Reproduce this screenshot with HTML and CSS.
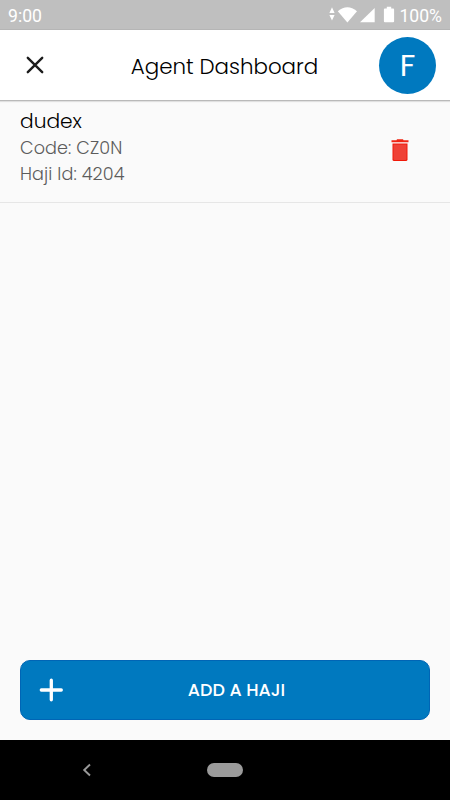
FILE: index.html
```html
<!DOCTYPE html>
<html lang="en">
<head>
    <meta charset="UTF-8">
    <meta name="viewport" content="width=device-width, initial-scale=1.0">
    <title>Agent Dashboard</title>
    <link rel="stylesheet" href="styles.css">
</head>
<body>
    <div class="status-bar">
        <span class="clock">9:00</span>
        <svg class="status-icons" width="68" height="20" viewBox="0 0 68 20" fill="#fff">
            <path d="M4 2.3L6.6 8H1.4zM4 15.6L1.4 10h5.2z"/>
            <path d="M9.8 6.3Q19.4-1.6 29 6.3L19.4 17.6z"/>
            <path d="M46.7 3v14.3H32z"/>
            <path d="M58.8 1.8h4.4v1.8h2q.9 0 .9.9v11.7q0 1.1-1 1.1h-8.2q-1 0-1-1.1V4.5q0-.9.9-.9h2z"/>
        </svg>
        <span class="battery">100%</span>
    </div>
    <header class="header">
        <button class="close" aria-label="Close">
            <svg width="18" height="18" viewBox="0 0 18 18" fill="none" stroke="#1c1c1c" stroke-width="2.4" stroke-linecap="round">
                <path d="M1.8 1.8l14.4 14.4M16.2 1.8L1.8 16.2"/>
            </svg>
        </button>
        <h1 class="title">Agent Dashboard</h1>
        <div class="avatar">F</div>
    </header>
    <main class="content">
        <div class="haji">
            <div class="haji-info">
                <p class="haji-name">dudex</p>
                <p class="haji-code">Code: CZ0N</p>
                <p class="haji-id">Haji Id: 4204</p>
            </div>
            <button class="delete" aria-label="Delete">
                <svg width="18" height="23" viewBox="0 0 18 23">
                    <path d="M.5 1.2h5L6 .2h6l.5 1h5v2H.5z" fill="#f02412"/>
                    <path d="M1.5 4.6h15v15.8q0 1.6-1.6 1.6H3.1q-1.6 0-1.6-1.6z" fill="#f01808"/>
                    <path d="M2.5 5.6h13v14.5q0 .9-.9.9H3.4q-.9 0-.9-.9z" fill="#ef4136"/>
                </svg>
            </button>
        </div>
        <button class="add">
            <svg width="24" height="24" viewBox="0 0 24 24" fill="none" stroke="#fff" stroke-width="3.3" stroke-linecap="round">
                <path d="M12.3 2.2v19.6M2.3 12h20"/>
            </svg>
            <span class="add-text">ADD A HAJI</span>
        </button>
    </main>
    <nav class="nav-bar">
        <svg class="back" width="10" height="14" viewBox="0 0 10 14" fill="none" stroke="#999" stroke-width="1.9">
            <path d="M8 1.5L2.2 7 8 12.5"/>
        </svg>
        <div class="home"></div>
    </nav>
</body>
</html>
```
FILE: styles.css
```css
html, body{
    margin: 0;
    padding: 0;
    height: 100vh;
}
body{
    display: flex;
    flex-direction: column;
    overflow: hidden;
    background-color: #fafafa;
    font-family: Poppins, Inter, sans-serif;
    font-weight: 300;
    font-feature-settings: "cv11";
    color: #000;
}
h1, p{
    margin: 0;
    white-space: nowrap;
}
button{
    padding: 0;
    border: none;
    background: none;
    font-family: inherit;
    font-feature-settings: inherit;
    cursor: pointer;
}
svg{
    display: block;
    flex: none;
}
.status-bar{
    display: flex;
    align-items: center;
    box-sizing: border-box;
    height: 30px;
    padding: 2px 8px 0 8px;
    background-color: #bfbfbf;
    border-bottom: 1px solid #b5b5b5;
    color: white;
    font-family: Roboto, sans-serif;
    font-size: 17.6px;
    font-weight: 400;
}
.status-icons{
    margin-left: auto;
    margin-top: -2px;
}
.battery{
    margin-left: 3px;
}
.header{
    display: flex;
    align-items: center;
    justify-content: space-between;
    box-sizing: border-box;
    height: 71px;
    padding: 0 14px 0 26px;
    background-color: white;
    border-bottom: 1px solid #b9b9b9;
    box-shadow: 0 1px 1px rgba(0, 0, 0, 0.1);
}
.title{
    margin-top: 2px;
    margin-left: 26px;
    font-size: 21.4px;
    font-weight: 300;
}
.avatar{
    width: 57px;
    height: 57px;
    border-radius: 50%;
    background-color: #0079bf;
    color: white;
    font-size: 31px;
    font-weight: 400;
    line-height: 57px;
    text-align: center;
}
.content{
    flex: 1;
    display: flex;
    flex-direction: column;
    justify-content: space-between;
}
.haji{
    display: flex;
    align-items: center;
    justify-content: space-between;
    box-sizing: border-box;
    height: 102px;
    padding: 0 41px 2px 20px;
    border-bottom: 1px solid #e6e6e6;
}
.haji-info{
    margin-top: -8px;
    color: #5c5c5c;
    font-size: 17.6px;
    line-height: 26px;
    letter-spacing: 0.1px;
}
.haji-name{
    color: #000;
    font-size: 20.2px;
    line-height: 28px;
    letter-spacing: 0;
}
.add{
    display: flex;
    align-items: center;
    height: 60px;
    margin: 0 20px 20px;
    padding: 0 19px 0 18px;
    box-sizing: border-box;
    border: 1px solid #0065b5;
    border-radius: 10px;
    background-color: #0079bf;
    color: white;
}
.add-text{
    flex: 1;
    font-size: 17.5px;
    font-weight: 500;
    text-align: center;
}
.nav-bar{
    display: grid;
    grid-template-columns: 1fr auto 1fr;
    align-items: center;
    height: 60px;
    background-color: black;
}
.back{
    margin-left: 82px;
}
.home{
    width: 36px;
    height: 14px;
    border-radius: 7px;
    background-color: #9b9b9b;
}
```
